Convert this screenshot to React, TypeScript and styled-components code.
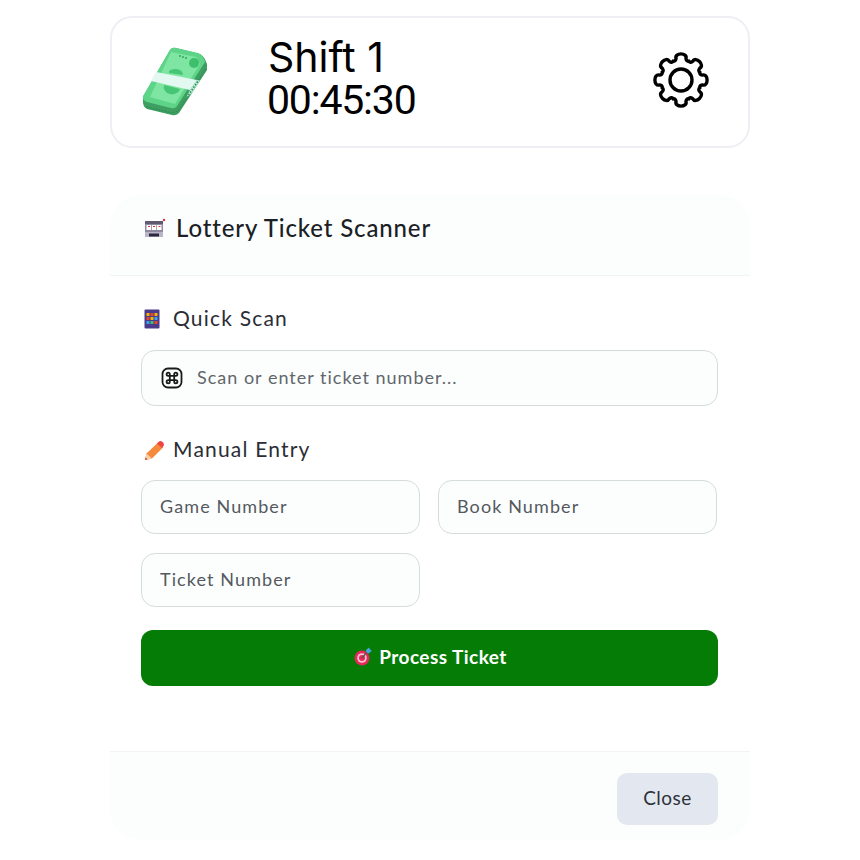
import styled, {createGlobalStyle} from "styled-components";

const GlobalStyle = createGlobalStyle`
  html, body {
    margin: 0;
    padding: 0;
    background: #ffffff;
  }
  * {
    box-sizing: border-box;
  }
`;

const MoneyIcon = () => (
  <svg width="66" height="70" viewBox="0 0 66 70">
    <path d="M1 50 L28 3 Q30 0 34 1 L58 7 Q62 9 65 17 L65 23 L37 66 Q34 69 30 68 L5 62 Q1 60 1 55Z" fill="#3f9f62" />
    <path d="M1 49 L28 3 Q30 0 34 1 L56 6 Q61 8 63 15 L35 59 Q33 62 29 61 L5 55 Q0 53 1 49Z" fill="#5ed488" />
    <path d="M29 5 L54 10 L58 17 L33 57 L8 50Z" fill="#7fe5a2" />
    <circle cx="52" cy="16" r="5" fill="#3fbf6c" />
    <path d="M27 24 a8 6 0 0 1 14 4 L27 26Z" fill="#46c574" />
    <path d="M22 38 L38 42 a8 7 0 0 1 -16 -4Z" fill="#46c574" />
    <circle cx="38" cy="9" r="0.9" fill="#2f9f58" />
    <circle cx="41" cy="10" r="0.9" fill="#2f9f58" />
    <circle cx="44" cy="11" r="0.9" fill="#2f9f58" />
    <path d="M14 25 L55 33 L48 43 L9 34Z" fill="#e2f8f0" />
    <path d="M55 33 L48 43 L44 51 L50 46 L58 33Z" fill="#b6ebd6" />
    <path d="M5 60 L30 66 L36 64 L64 22" stroke="#2f8f52" strokeWidth="1.5" strokeDasharray="1.5 1.5" fill="none" />
  </svg>
);

const SlotIcon = () => (
  <svg width="22" height="20" viewBox="0 0 22 20">
    <circle cx="20" cy="2" r="1.2" fill="#e0323c" />
    <rect x="1" y="3" width="18" height="16" rx="1.5" fill="#8f8aa0" />
    <rect x="1" y="3" width="18" height="3" fill="#5f5a70" />
    <rect x="2.5" y="7" width="4.5" height="5" fill="#ffffff" />
    <rect x="7.8" y="7" width="4.5" height="5" fill="#ffffff" />
    <rect x="13" y="7" width="4.5" height="5" fill="#ffffff" />
    <path d="M4 8.5h2M9 8.5h2M14.5 8.5h2" stroke="#e0323c" strokeWidth="1.2" />
    <rect x="1" y="14" width="18" height="5" fill="#b9b5c6" />
    <rect x="5" y="15.5" width="10" height="3" fill="#2b2840" />
  </svg>
);

const AbacusIcon = () => (
  <svg width="16" height="20" viewBox="0 0 16 20">
    <rect x="0.5" y="0.5" width="15" height="19" rx="1" fill="#4b3a8c" />
    <rect x="2.5" y="4" width="3" height="3" fill="#f4b400" />
    <rect x="6.5" y="4" width="3" height="3" fill="#e8452c" />
    <rect x="10.5" y="4" width="3" height="3" fill="#f4b400" />
    <rect x="2.5" y="8" width="3" height="3" fill="#e8452c" />
    <rect x="6.5" y="8" width="3" height="3" fill="#f4b400" />
    <rect x="10.5" y="8" width="3" height="3" fill="#38a3e8" />
    <rect x="2.5" y="12" width="3" height="3" fill="#38a3e8" />
    <rect x="6.5" y="12" width="3" height="3" fill="#3fbf6c" />
    <rect x="10.5" y="12" width="3" height="3" fill="#e8452c" />
  </svg>
);

const PencilIcon = () => (
  <svg width="21" height="21" viewBox="0 0 21 21">
    <path d="M1 20 L2.5 13.5 L14 2.5 L19 7.5 L8 18.5Z" fill="#f58a3c" />
    <path d="M1 20 L2.5 13.5 L8 18.5Z" fill="#f6cfa8" />
    <path d="M1 20 L1.6 17.5 L3.5 19.3Z" fill="#c0392b" />
    <path d="M13 3.5 L15 1.5 Q16.5 0.5 18 1.5 L19.5 3 Q20.5 4.5 19.5 6 L18 8Z" fill="#ef4444" />
  </svg>
);

const CommandIcon = () => (
  <svg width="22" height="22" viewBox="0 0 22 22" fill="none" stroke="#1a1a1a" strokeWidth="1.8" strokeLinecap="round" strokeLinejoin="round">
    <rect x="1.5" y="1.5" width="19" height="19" rx="5.5" />
    <path d="M8.8 8.8h4.4v4.4H8.8zM8.8 8.8H7.2a1.6 1.6 0 1 1 1.6-1.6zM13.2 8.8V7.2a1.6 1.6 0 1 1 1.6 1.6zM13.2 13.2h1.6a1.6 1.6 0 1 1-1.6 1.6zM8.8 13.2v1.6a1.6 1.6 0 1 1-1.6-1.6z" />
  </svg>
);

const TargetIcon = () => (
  <svg width="20" height="20" viewBox="0 0 20 20">
    <circle cx="10" cy="11" r="7.5" fill="#e8285a" />
    <circle cx="10" cy="11" r="4.8" fill="#f7c6d2" />
    <circle cx="10" cy="11" r="3" fill="#e8285a" />
    <path d="M10 11 L16 4" stroke="#555" strokeWidth="1.2" />
    <path d="M14 3 L17 0.5 L18 2.5 L19.8 3.5 L17 6.5 L14.5 5.5Z" fill="#4aa3e8" />
  </svg>
);

const polar = (deg: number, r: number) => {
  const t = ((deg - 90) * Math.PI) / 180;
  return `${(30 + r * Math.cos(t)).toFixed(2)} ${(30 + r * Math.sin(t)).toFixed(2)}`;
};

// eight rounded teeth, one on top
const gearPath = Array.from({length: 8}, (_, i) => {
  const a = i * 45;
  return [
    i === 0 ? `M${polar(a - 22.5, 20.5)}` : '',
    `Q${polar(a - 17, 19)} ${polar(a - 13, 22)}`,
    `C${polar(a - 14, 28.5)} ${polar(a + 14, 28.5)} ${polar(a + 13, 22)}`,
    `Q${polar(a + 17, 19)} ${polar(a + 22.5, 20.5)}`,
  ].join(' ');
}).join(' ') + 'Z';

const GearSvg = styled.svg`
  margin-bottom: 4px;
`;

const GearIcon = () => (
  <GearSvg width="60" height="60" viewBox="0 0 60 60" fill="none" stroke="#000000" strokeWidth="3.4" strokeLinejoin="round">
    <path d={gearPath} />
    <circle cx="30" cy="30" r="11" />
  </GearSvg>
);

const Page = styled.div`
  width: 640px;
  margin: 0 auto;
  padding-top: 16px;
  font-family: "Lato", "Noto Sans", sans-serif;
`;

const ShiftCard = styled.header`
  height: 132px;
  display: flex;
  align-items: center;
  padding: 0 37px 0 30px;
  border: 2px solid #eeeef4;
  border-radius: 22px;
  background: #ffffff;
`;

const ShiftInfo = styled.div`
  flex: 1;
  margin-left: 60px;
  padding-bottom: 8px;
  color: #000000;
`;

const ShiftName = styled.div`
  font-family: "Inter", sans-serif;
  font-size: 41px;
  line-height: 44px;
`;

const ShiftClock = styled.div`
  font-family: "Roboto", sans-serif;
  font-size: 41px;
  line-height: 42px;
  letter-spacing: -1.2px;
  margin-left: -1px;
`;

const Modal = styled.section`
  margin-top: 47px;
`;

const ModalHeader = styled.div`
  height: 81px;
  display: flex;
  align-items: center;
  gap: 10px;
  padding: 0 34px 15px;
  background: #fcfefe;
  border-bottom: 1px solid #f1f4f5;
  border-radius: 30px 30px 0 0;
`;

const ModalTitle = styled.h2`
  margin: 0;
  font-size: 24px;
  font-weight: 500;
  color: #1c1f26;
  letter-spacing: 0.85px;
`;

const ModalBody = styled.div`
  padding: 30px 32px 0 31px;
  display: flex;
  flex-direction: column;
  height: 475px;
`;

const SectionLabel = styled.div<{$spaced?: boolean}>`
  display: flex;
  align-items: center;
  height: 26px;
  margin-top: ${({$spaced}) => ($spaced ? "31px" : "0")};
  padding: 0 0 3px 3px;
  font-size: 21px;
  color: #2a2d35;
  letter-spacing: 1.2px;
`;

const LabelIcon = styled.span`
  width: 29px;
  display: flex;
  padding-top: 3px;
`;

const ScanField = styled.div`
  margin-top: 18px;
  height: 56px;
  display: flex;
  align-items: center;
  gap: 14px;
  padding: 0 19px;
  background: #fcfefe;
  border: 1px solid #d5dcdc;
  border-radius: 14px;
  font-size: 18px;
  color: #62666c;
  letter-spacing: 1px;
`;

const ScanText = styled.span`
  padding-bottom: 3px;
`;

const ManualGrid = styled.div`
  margin-top: 17px;
  display: grid;
  grid-template-columns: 279px 279px;
  gap: 19px 18px;
`;

const Field = styled.div`
  height: 54px;
  display: flex;
  align-items: center;
  padding: 0 18px 3px;
  background: #fcfefe;
  border: 1px solid #d5dcdc;
  border-radius: 14px;
  font-size: 18px;
  color: #55595f;
  letter-spacing: 1.1px;
`;

const ProcessButton = styled.button`
  margin-top: 23px;
  height: 56px;
  display: flex;
  align-items: center;
  justify-content: center;
  gap: 7px;
  padding: 0 0 3px;
  border: none;
  border-radius: 12px;
  background: #057c05;
  color: #ffffff;
  font-family: inherit;
  font-size: 19px;
  font-weight: 700;
  letter-spacing: 0.45px;
`;

const ModalFooter = styled.div`
  height: 89px;
  display: flex;
  justify-content: flex-end;
  padding: 21px 32px 0 0;
  background: #fcfefe;
  border-top: 1px solid #f1f4f5;
  border-radius: 0 0 30px 30px;
`;

const CloseButton = styled.button`
  width: 101px;
  height: 52px;
  padding: 0 0 4px;
  border: none;
  border-radius: 10px;
  background: #e3e7f0;
  color: #2f3238;
  font-family: inherit;
  font-size: 19px;
  letter-spacing: 0.5px;
`;

const App = () => (
  <>
    <GlobalStyle />
    <Page>
      <ShiftCard>
        <MoneyIcon />
        <ShiftInfo>
          <ShiftName>Shift 1</ShiftName>
          <ShiftClock>00:45:30</ShiftClock>
        </ShiftInfo>
        <GearIcon />
      </ShiftCard>
      <Modal>
        <ModalHeader>
          <SlotIcon />
          <ModalTitle>Lottery Ticket Scanner</ModalTitle>
        </ModalHeader>
        <ModalBody>
          <SectionLabel><LabelIcon><AbacusIcon /></LabelIcon>Quick Scan</SectionLabel>
          <ScanField><CommandIcon /><ScanText>Scan or enter ticket number...</ScanText></ScanField>
          <SectionLabel $spaced><LabelIcon><PencilIcon /></LabelIcon>Manual Entry</SectionLabel>
          <ManualGrid>
            <Field>Game Number</Field>
            <Field>Book Number</Field>
            <Field>Ticket Number</Field>
          </ManualGrid>
          <ProcessButton><TargetIcon />Process Ticket</ProcessButton>
        </ModalBody>
        <ModalFooter>
          <CloseButton>Close</CloseButton>
        </ModalFooter>
      </Modal>
    </Page>
  </>
);

export default App;
